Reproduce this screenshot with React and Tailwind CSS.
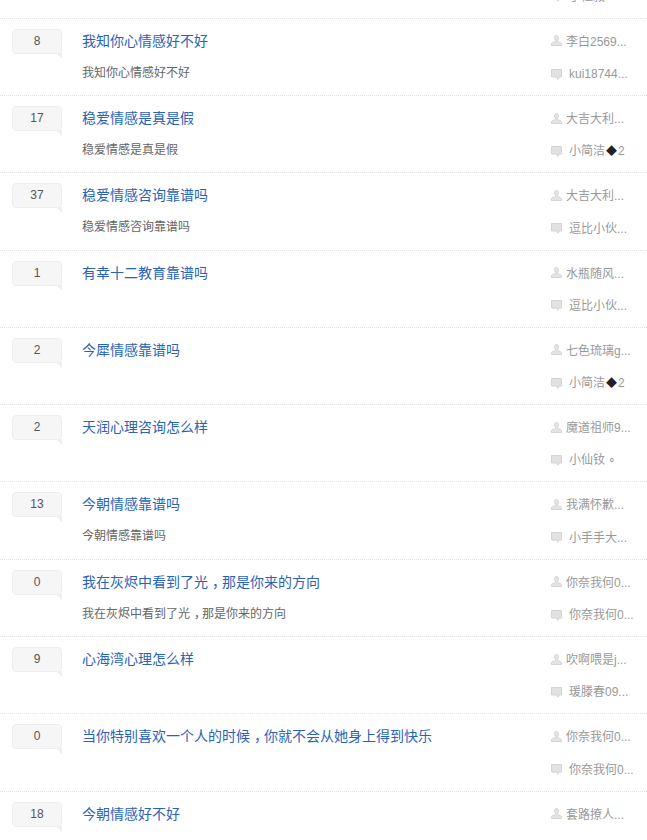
const rows = [
  { count: 8, title: "我知你心情感好不好", desc: "我知你心情感好不好", user: "李白2569...", reply: "kui18744..." },
  { count: 17, title: "稳爱情感是真是假", desc: "稳爱情感是真是假", user: "大吉大利...", reply: "小简洁", diamond: true },
  { count: 37, title: "稳爱情感咨询靠谱吗", desc: "稳爱情感咨询靠谱吗", user: "大吉大利...", reply: "逗比小伙..." },
  { count: 1, title: "有幸十二教育靠谱吗", user: "水瓶随风...", reply: "逗比小伙..." },
  { count: 2, title: "今犀情感靠谱吗", user: "七色琉璃g...", reply: "小简洁", diamond: true },
  { count: 2, title: "天润心理咨询怎么样", user: "魔道祖师9...", reply: "小仙钕 ∘" },
  { count: 13, title: "今朝情感靠谱吗", desc: "今朝情感靠谱吗", user: "我满怀歉...", reply: "小手手大..." },
  { count: 0, title: "我在灰烬中看到了光，那是你来的方向", desc: "我在灰烬中看到了光，那是你来的方向", user: "你奈我何0...", reply: "你奈我何0..." },
  { count: 9, title: "心海湾心理怎么样", user: "吹啊喂是j...", reply: "瑗滕春09..." },
  { count: 0, title: "当你特别喜欢一个人的时候，你就不会从她身上得到快乐", user: "你奈我何0...", reply: "你奈我何0..." },
  { count: 18, title: "今朝情感好不好", user: "套路撩人...", reply: "小简洁", diamond: true },
];

function UserIcon() {
  return (
    <svg width="11" height="11" viewBox="0 0 11 11" className="shrink-0 mb-0.5">
      <path
        fill="#e4e4e4"
        stroke="#d4d4d4"
        d="M5.500.5C4.200.5 3.500 1.500 3.500 2.800c0 1 .4 1.800 1 2.400v1.300L1 8c-.4.200-.5.500-.5.900v1.600h10V8.900c0-.4-.1-.7-.5-.9L6.500 6.500V5.200c.6-.6 1-1.400 1-2.400C7.500 1.500 6.800.5 5.500.5z"
      />
    </svg>
  );
}

function CommentIcon() {
  return (
    <svg width="11" height="11" viewBox="0 0 11 11" className="shrink-0">
      <path fill="#e2e2e2" stroke="#d4d4d4" d="M.5.5h10v7.500H8L6.500 10.500V8H.5z" />
    </svg>
  );
}

// the comma sits in the middle of its cell in the reference, the SC face puts it at the left
function Title({ text }) {
  const parts = text.split("，");
  return parts.map((part, i) => (
    <span key={i}>
      {i > 0 && <span className="inline-block translate-x-[4px]">，</span>}
      {part}
    </span>
  ));
}

function Row({ row }) {
  return (
    <div className="flex h-[77.3px] border-b border-dotted border-[#e2e2e2]">
      <div className="ml-3 mt-[10px] relative w-[50px] h-[25px] rounded-sm border border-[#eee] bg-[#f6f6f6] text-center text-xs leading-[23px] text-[#555] shrink-0">
        {row.count}
        <span className="absolute right-[-1px] top-[23px] border-l-[6px] border-t-[6px] border-l-transparent border-t-[#eee]" />
      </div>
      <div className="ml-5 flex-1 min-w-0">
        <a className="block mt-3 text-sm leading-5 text-[#2a62b8]">
          <Title text={row.title} />
        </a>
        {row.desc && (
          <p className="mt-3 text-xs leading-5 text-[#666]">
            <Title text={row.desc} />
          </p>
        )}
      </div>
      <div className="w-[96px] shrink-0 text-xs text-[#999]">
        <div className="flex items-center gap-1 mt-[13px] h-5">
          <UserIcon />
          <span className="whitespace-nowrap">{row.user}</span>
        </div>
        <div className="flex items-center gap-[7px] mt-[12.3px] h-5">
          <CommentIcon />
          <span className="whitespace-nowrap">
            {row.reply}
            {row.diamond && (
              <>
                <span className="text-[11px] px-px text-[#222]">◆</span>2
              </>
            )}
          </span>
        </div>
      </div>
    </div>
  );
}

export default function App() {
  return (
    <div className="h-[840px] overflow-hidden bg-white font-['Liberation_Sans','Noto_Sans_CJK_SC',sans-serif]">
      <div className="-mt-[58.6px]">
        <Row row={{ count: 3, title: "", user: "", reply: "于恒叙" }} />
        {rows.map((row, i) => (
          <Row key={i} row={row} />
        ))}
      </div>
    </div>
  );
}
